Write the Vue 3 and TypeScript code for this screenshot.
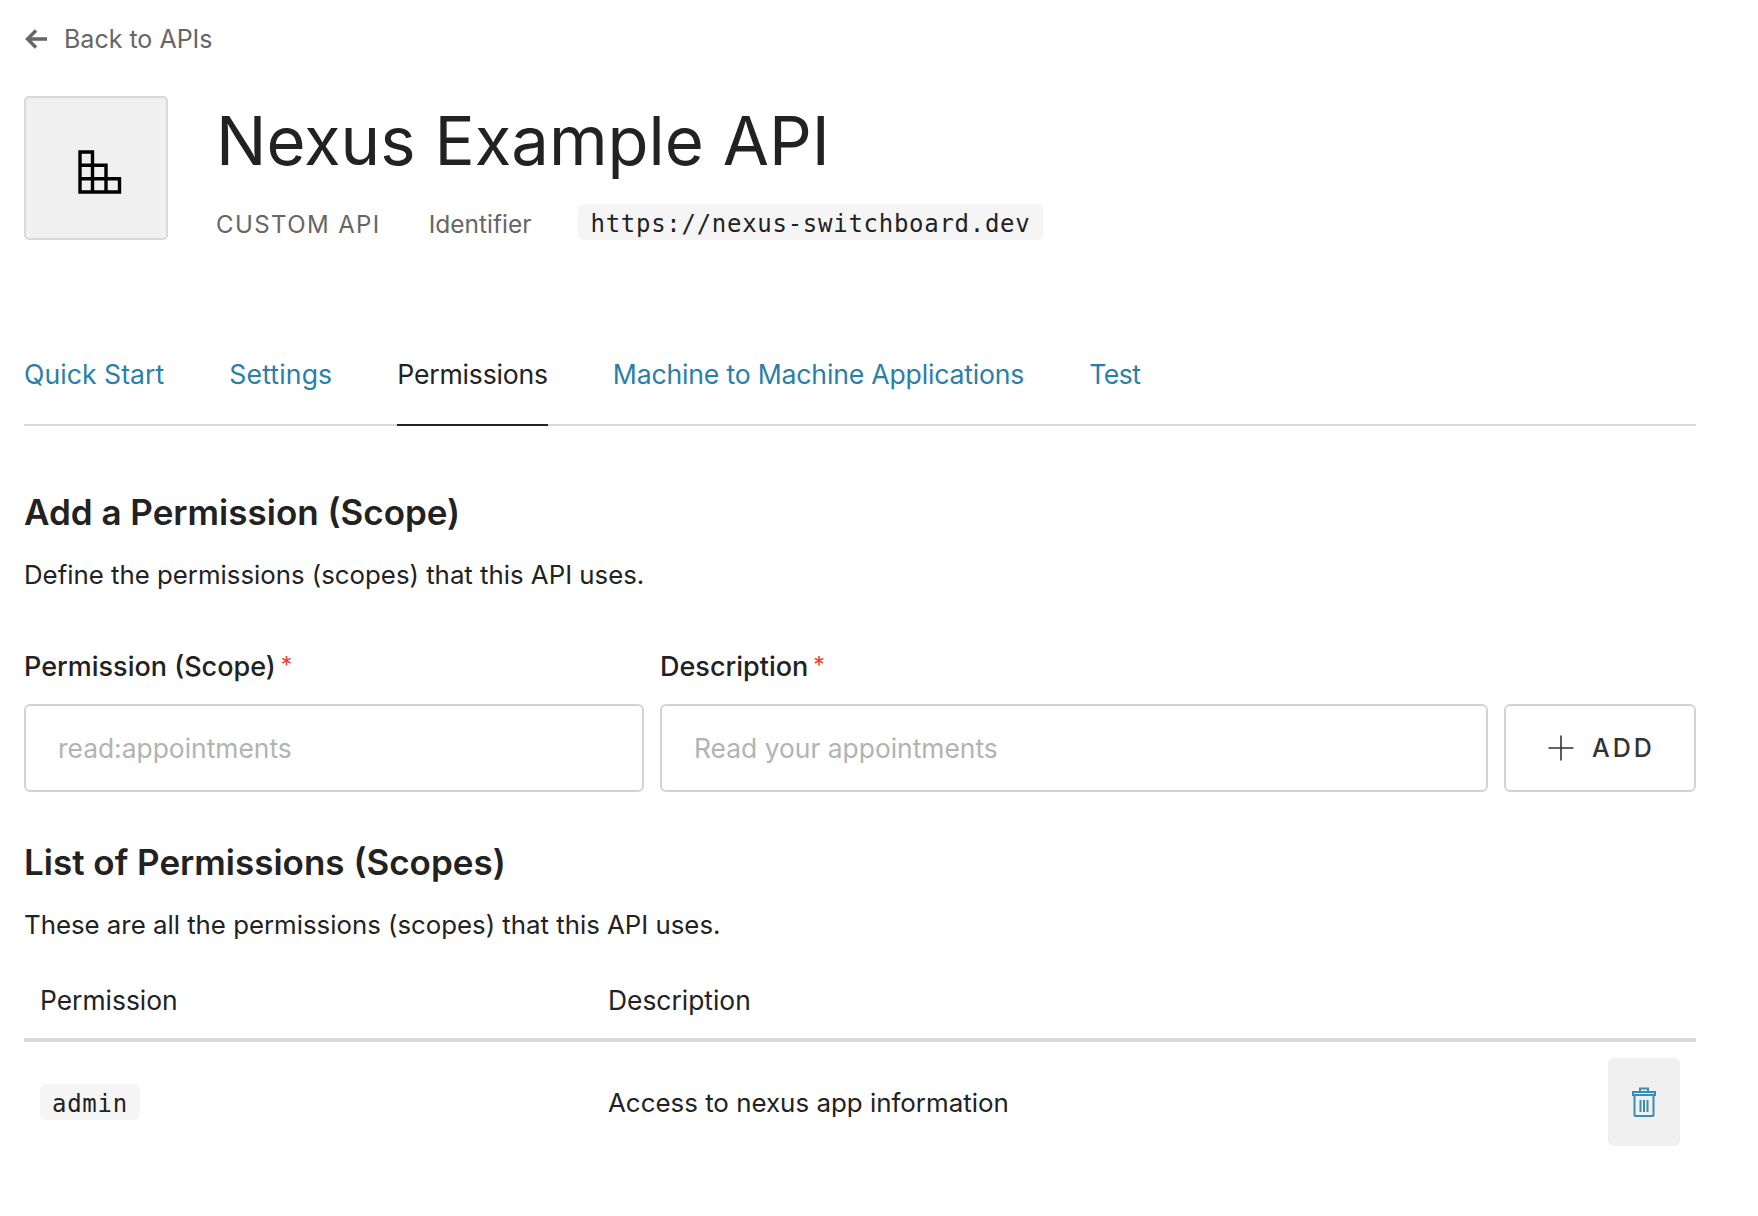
<script setup lang="ts">
// spacing evens out each tab's width against the original typeface
const tabs = [
  { label: 'Quick Start', spacing: 0.05 },
  { label: 'Settings', spacing: 0.15 },
  { label: 'Permissions', spacing: -0.2, active: true },
  { label: 'Machine to Machine Applications', spacing: -0.18 },
  { label: 'Test', spacing: -0.5 },
]
</script>

<template>
  <main class="page">
    <a class="back">
      <svg width="24" height="24" viewBox="0 0 24 24" fill="none" stroke="#666" stroke-width="3.4">
        <path d="M23 12H4M12 3.5L3.5 12l8.5 8.5" />
      </svg>
      <span>Back to APIs</span>
    </a>

    <header class="head">
      <div class="logo">
        <svg width="44" height="44" viewBox="0 0 44 44" fill="none" stroke="#000" stroke-width="3.4">
          <path d="M2 2h12.5v40H2zM14.5 15.3H28V42H14.5zM28 28.7h13.5V42H28zM2 15.3h12.5M2 28.7h26" />
        </svg>
      </div>
      <div class="head-text">
        <h1>Nexus Example API</h1>
        <div class="meta">
          <span class="type">CUSTOM API</span>
          <span class="ident">Identifier</span>
          <code class="pill">https://nexus-switchboard.dev</code>
        </div>
      </div>
    </header>

    <nav class="tabs">
      <a
        v-for="t in tabs"
        :key="t.label"
        :class="['tab', { active: t.active }]"
        :style="{ letterSpacing: `${t.spacing}px` }"
      >{{ t.label }}</a>
    </nav>

    <section class="add">
      <h2>Add a Permission (Scope)</h2>
      <p>Define the permissions (scopes) that this API uses.</p>
      <form class="form" @submit.prevent>
        <label class="field scope">
          <span class="label">Permission (Scope)<i>*</i></span>
          <input placeholder="read:appointments" />
        </label>
        <label class="field desc">
          <span class="label">Description<i>*</i></span>
          <input placeholder="Read your appointments" />
        </label>
        <button class="add-btn">
          <svg width="26" height="26" viewBox="0 0 26 26" stroke="#333" stroke-width="1.6">
            <path d="M13 0.5v25M0.5 13h25" />
          </svg>
          <span>ADD</span>
        </button>
      </form>
    </section>

    <section class="list">
      <h2>List of Permissions (Scopes)</h2>
      <p>These are all the permissions (scopes) that this API uses.</p>
      <div class="table-head">
        <span>Permission</span>
        <span>Description</span>
      </div>
      <div class="row">
        <span><code class="pill small">admin</code></span>
        <span>Access to nexus app information</span>
        <button class="trash" aria-label="Delete">
          <svg width="24" height="30" viewBox="0 0 24 30" fill="none" stroke="#3a8bb5" stroke-width="2">
            <path d="M8 5V1.5h8V5M1 5h22v3H1zM2.5 8v20a1 1 0 0 0 1 1h17a1 1 0 0 0 1-1V8" />
            <path d="M8.5 13v12M12 13v12M15.5 13v12" />
          </svg>
        </button>
      </div>
    </section>
  </main>
</template>

<style>
body {
  background: #fff;
}
</style>

<style scoped>
.page {
  box-sizing: border-box;
  width: 1758px;
  height: 1216px;
  padding: 24px 62px 0 24px;
  font-family: Inter, "Liberation Sans", sans-serif;
  font-size: 25.9px;
  color: #222;
  overflow: hidden;
}

.back {
  display: flex;
  align-items: center;
  gap: 16px;
  height: 30px;
  color: #666;
  font-size: 25px;
}

.head {
  display: flex;
  gap: 48px;
  margin-top: 42px;
}

.logo {
  box-sizing: border-box;
  width: 144px;
  height: 144px;
  display: flex;
  align-items: center;
  justify-content: center;
  background: #f0f0f0;
  border: 2px solid #d9d9d9;
  border-radius: 5px;
}

.logo svg {
  margin: 7px 0 0 7px;
}

h1 {
  margin: 0;
  font-size: 67px;
  font-weight: 400;
  line-height: 90px;
}

.meta {
  display: flex;
  align-items: center;
  gap: 48px;
  margin-top: 18px;
  color: #666;
  font-size: 24px;
}

.type {
  letter-spacing: 1.4px;
}

.ident {
  font-size: 24.5px;
}

.pill {
  padding: 4px 12px 0;
  background: #f5f5f5;
  border-radius: 6px;
  color: #222;
  font-family: "DejaVu Sans Mono", monospace;
  font-size: 24px;
  line-height: 32px;
  letter-spacing: 0.72px;
}

.meta .pill {
  margin: 0 0 4px -2px;
  padding: 4px 13px 0;
}

.tabs {
  display: flex;
  gap: 65px;
  height: 92px;
  margin-top: 90px;
  box-sizing: border-box;
  border-bottom: 2px solid #d9d9d9;
  font-size: 26.6px;
}

.tab {
  height: 92px;
  box-sizing: border-box;
  padding-top: 24px;
  color: #2a7fa8;
}

.tab.active {
  color: #222;
  border-bottom: 2px solid #222;
}

h2 {
  margin: 0;
  font-size: 35px;
  font-weight: 560;
  line-height: 44px;
}

p {
  margin: 0;
  font-size: 25.8px;
  line-height: 40px;
}

.add {
  margin-top: 64px;
}

.add p {
  margin-top: 21px;
}

.form {
  display: flex;
  align-items: flex-end;
  gap: 16px;
  margin-top: 54px;
}

.field {
  display: flex;
  flex-direction: column;
  gap: 18px;
}

.scope {
  width: 620px;
}

.desc {
  width: 828px;
}

.label {
  font-size: 27px;
  font-weight: 450;
  line-height: 36px;
}

.label i {
  position: relative;
  top: -3px;
  margin-left: 5px;
  color: #ef3e2e;
  font-size: 23px;
  font-style: normal;
  font-weight: 400;
}

input {
  box-sizing: border-box;
  height: 88px;
  padding: 0 32px;
  border: 2px solid #d3d3d3;
  border-radius: 6px;
  font: inherit;
  font-size: 26.4px;
  outline: none;
}

input::placeholder {
  color: #b3b3b3;
}

.add-btn {
  box-sizing: border-box;
  width: 192px;
  height: 88px;
  display: flex;
  align-items: center;
  justify-content: center;
  gap: 18px;
  background: #fff;
  border: 2px solid #d3d3d3;
  border-radius: 6px;
  color: #333;
  font: inherit;
  font-size: 25px;
  font-weight: 500;
  letter-spacing: 3px;
}

.add-btn span {
  margin-right: -3px;
}

.list {
  margin-top: 48px;
}

.list p {
  margin-top: 21px;
}

.table-head,
.row {
  display: grid;
  grid-template-columns: 568px 1fr auto;
  padding-left: 16px;
}

.table-head {
  align-items: center;
  height: 76px;
  margin-top: 17px;
  border-bottom: 4px solid #d9d9d9;
  font-size: 26.4px;
}

.row {
  align-items: center;
  padding: 16px 16px 0;
}

.pill.small {
  display: inline-block;
}

.trash {
  width: 72px;
  height: 88px;
  display: flex;
  align-items: center;
  justify-content: center;
  padding: 0;
  background: #f0f0f0;
  border: none;
  border-radius: 6px;
}
</style>
